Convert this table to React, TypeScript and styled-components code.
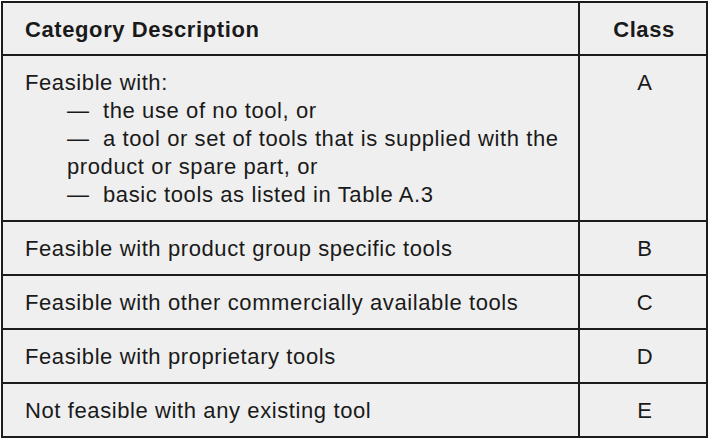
import React from "react";
import styled, { createGlobalStyle } from "styled-components";

const Global = createGlobalStyle`
  html, body { margin: 0; padding: 0; background: #ffffff; }
  body { font-family: "Liberation Sans", Arial, sans-serif; color: #1a1a1a; }
`;

const Page = styled.div`
  padding: 1px 0 0 1px;
  width: 709px;
  height: 441px;
  box-sizing: border-box;
`;

const Table = styled.table`
  border-collapse: collapse;
  width: 705px;
  background: #efefef;
  table-layout: fixed;
`;

const Col = styled.col<{ $w: number }>`
  width: ${(p) => p.$w}px;
`;

const Th = styled.th<{ $center?: boolean }>`
  border: 2px solid #1c1c1c;
  height: 53px;
  box-sizing: border-box;
  padding: 3px ${(p) => (p.$center ? "22px 0 24px" : "8px 0 22px")};
  font-size: 22px;
  letter-spacing: 0.6px;
  font-weight: bold;
  text-align: ${(p) => (p.$center ? "center" : "left")};
  vertical-align: middle;
  color: #1a1a1a;
`;

const Td = styled.td<{ $center?: boolean }>`
  border: 2px solid #1c1c1c;
  padding: 13px ${(p) => (p.$center ? "20px 11px 24px" : "6px 11px 22px")};
  font-size: 22px;
  letter-spacing: 0.6px;
  line-height: 28px;
  text-align: ${(p) => (p.$center ? "center" : "left")};
  vertical-align: top;
  color: #1a1a1a;
`;

const List = styled.div`
  padding-left: 42px;
`;

const Dash = styled.span`
  display: inline-block;
  width: 36px;
  letter-spacing: 0;
`;

const rows: [string, string][] = [
  ["Feasible with product group specific tools", "B"],
  ["Feasible with other commercially available tools", "C"],
  ["Feasible with proprietary tools", "D"],
  ["Not feasible with any existing tool", "E"],
];

export default function App() {
  return (
    <Page>
      <Global />
      <Table>
        <colgroup>
          <Col $w={577} />
          <Col $w={128} />
        </colgroup>
        <thead>
          <tr>
            <Th>Category Description</Th>
            <Th $center>Class</Th>
          </tr>
        </thead>
        <tbody>
          <tr>
            <Td>
              Feasible with:
              <List>
                <div>
                  <Dash>—</Dash>the use of no tool, or
                </div>
                <div>
                  <Dash>—</Dash>a tool or set of tools that is supplied with the product or spare part, or
                </div>
                <div>
                  <Dash>—</Dash>basic tools as listed in Table A.3
                </div>
              </List>
            </Td>
            <Td $center>A</Td>
          </tr>
          {rows.map(([d, c]) => (
            <tr key={c}>
              <Td>{d}</Td>
              <Td $center>{c}</Td>
            </tr>
          ))}
        </tbody>
      </Table>
    </Page>
  );
}
